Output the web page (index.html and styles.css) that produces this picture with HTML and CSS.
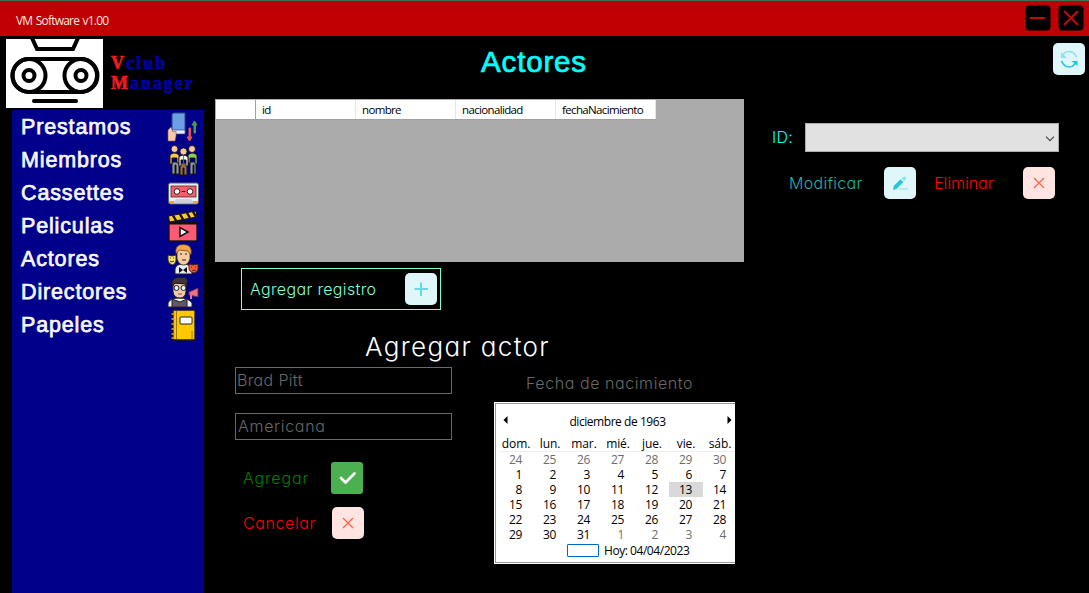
FILE: index.html
```html
<!DOCTYPE html>
<html lang="es">
<head>
<meta charset="utf-8">
<title>VM Software</title>
<link rel="stylesheet" href="styles.css">
</head>
<body>
<div class="window">
  <header class="titlebar">
    <span class="app-name">VM Software v1.00</span>
    <div class="window-buttons">
      <svg width="26" height="26" viewBox="0 0 26 26"><rect x=".5" y=".5" width="25" height="25" rx="4"/><path d="M5 13H20"/></svg>
      <svg width="26" height="26" viewBox="0 0 26 26"><rect x=".5" y=".5" width="25" height="25" rx="4"/><path d="M6 6L20 20M20 6L6 20"/></svg>
    </div>
  </header>
  <div class="body">
    <aside class="side">
      <div class="brand">
        <svg class="logo" width="97" height="69" viewBox="0 0 97 69" fill="none" stroke="#000" stroke-width="4">
          <rect width="97" height="69" fill="#fff" stroke="none"/>
          <path d="M26 -1L31 10H67L72 -1"/>
          <rect x="6.500" y="20" width="84.500" height="33" rx="16.5"/>
          <circle cx="23" cy="36.500" r="16.500"/><circle cx="75" cy="36.500" r="16.500"/>
          <circle cx="23" cy="36.500" r="5.500"/><circle cx="75" cy="36.500" r="5.500"/>
          <path d="M28 62H70" stroke-linecap="round"/>
        </svg>
        <div class="brand-name"><div class="b1"><b>V</b>club</div><div class="b2"><b>M</b>anager</div></div>
      </div>
      <nav class="menu">
        <a class="item">Prestamos
          <svg viewBox="0 0 32 32"><path d="M5 4Q5 2 7 2H18V21H5Z" fill="#6d9fe6" stroke="#254b86"/><path d="M5 19H18V23H6Z" fill="#e8eef8" stroke="#254b86" stroke-width=".7"/><path d="M1 30V19L4 16L6 21L9 20V25L8 30Z" fill="#f6c9ae" stroke="#8a5b4b" stroke-width=".6"/><path d="M27 22V14H25L27.500 10L30 14H28.500V22Z" fill="#43a047" stroke="#43a047"/><path d="M22 17V26H20L22.500 30L25 26H23.500V17Z" fill="#e05555" stroke="#e05555"/></svg></a>
        <a class="item">Miembros
          <svg viewBox="0 0 32 32" stroke="#111" stroke-width=".9"><path d="M5 18H12V30H9V21H8V30H5ZM23 18H29V30H27V21H26V30H23Z" fill="#8b98a5"/><path d="M3 11Q7 7 12 11V19H10V14H5V20H3Z" fill="#ffc84b"/><path d="M21 11Q25 7 30 11V20H28V14H23V19H21Z" fill="#8bcf5b"/><circle cx="7.500" cy="5" r="3.500" fill="#f8c9a0"/><circle cx="25" cy="5" r="3.500" fill="#f8c9a0"/><path d="M13 19H20V31H17V24H16V31H13Z" fill="#9b6b43"/><path d="M12 13Q16 9 21 13V22H19V16H14V22H12Z" fill="#f4f4f4"/><path d="M16.500 12V19" stroke="#d33"/><circle cx="16.500" cy="7.500" r="3.600" fill="#f8c9a0"/></svg></a>
        <a class="item">Cassettes
          <svg viewBox="0 0 32 32"><rect x="1.500" y="6" width="30" height="21" rx="2" fill="#e9edf2" stroke="#58606b"/><rect x="4" y="9" width="25" height="11" fill="#ff5b6b" stroke="#222" stroke-width=".7"/><g fill="#fff" stroke="#222"><circle cx="10" cy="14.500" r="2.800"/><circle cx="23" cy="14.500" r="2.800"/></g><path d="M14.500 14.500H18.500" stroke="#222"/><path d="M6 26L9 22H24L27 26Z" fill="#ccd2dc"/><path d="M2 25H7M26 25H31" stroke="#f6a623" stroke-width="2"/></svg></a>
        <a class="item">Peliculas
          <svg viewBox="0 0 32 32"><rect x="2" y="13" width="28" height="18" fill="#ff5a74" stroke="#111" stroke-width="1.300"/><path d="M1.500 6L29 1L30 7L2.500 12Z" fill="#ffc928" stroke="#111"/><path d="M6 5.500L9 10.500M13 4L16 9.500M20 3L23 8M26 1.500L29 7" stroke="#111" stroke-width="2.400"/><path d="M2 12H30V14.500H2Z" fill="#111"/><path d="M13 17.500V26.500L21 22Z" fill="#fff" stroke="#111" stroke-width="1.500"/></svg></a>
        <a class="item">Actores
          <svg viewBox="0 0 32 32"><path d="M8 31V26Q9 21 16 21Q23 21 25 26V31Z" fill="#e5edf5" stroke="#222"/><path d="M10 8Q10 3 16 3Q23 3 23 9V16Q21 22 16.500 22Q12 22 10 16Z" fill="#f6cc9f" stroke="#2b2020" stroke-width=".8"/><path d="M9 11Q7 1 17 1.500Q26 2 24 12L21 8L12 7Z" fill="#f4a64c" stroke="#583521" stroke-width=".7"/><path d="M13 11H15M18 11H20M15 17H19" stroke="#222"/><path d="M12 24L16 27L12 30ZM20 24L16 27L20 30Z" fill="#111"/><path d="M1 12Q5 14 9 12V18Q8 22 5 22Q1 20 1 17Z" fill="#ffe56b" stroke="#332"/><path d="M3 15H4M6 15H7M3 18Q5 20 7 18" stroke="#332" fill="none"/><path d="M22 21Q26 23 31 21V26Q30 30 27 30Q22 29 22 25Z" fill="#ff5738" stroke="#522"/><path d="M24 24H25M28 24H29M25 28Q27 26 29 28" stroke="#332" fill="none"/></svg></a>
        <a class="item">Directores
          <svg viewBox="0 0 32 32"><path d="M1 31V27Q3 22 12 22Q22 22 25 27V31Z" fill="#eef3f7" stroke="#222"/><path d="M5 31V23L13 26L20 23V31Z" fill="#665766" stroke="#222"/><path d="M6 7H19V16Q18 22 13 22Q7 22 6 16Z" fill="#f3c9a7" stroke="#222"/><path d="M5 11V5Q8 0 15 1.500Q22 0 20 8V11L18 8L8 7Z" fill="#41353d" stroke="#191519"/><g fill="#dff4ff" stroke="#222"><circle cx="9.500" cy="12" r="2.500"/><circle cx="16.500" cy="12" r="2.500"/></g><path d="M11 18H15" stroke="#854"/><path d="M22 16L31 12V21L22 19Z" fill="#ef7185" stroke="#612e49"/><path d="M24 19V23" stroke="#ef7185" stroke-width="2"/></svg></a>
        <a class="item">Papeles
          <svg viewBox="0 0 32 32"><path d="M6 1H28V31H6Z" fill="#ffc800" stroke="#1b1b1b" stroke-width="1.300"/><path d="M9.500 2V30" stroke="#80651a" stroke-width=".8"/><path d="M4.500 5H8M4.500 10H8M4.500 15H8M4.500 20H8M4.500 25H8M4.500 29H8" stroke="#d9aa22" stroke-width="1.600"/><rect x="13" y="8" width="12" height="7" rx="1" fill="#fff" stroke="#222"/><path d="M25 30V22" stroke="#9a7700"/></svg></a>
      </nav>
    </aside>
    <main class="content">
      <h1 class="page-title">Actores</h1>
      <div class="table">
        <div class="thead"><span class="corner"></span><span>id</span><span>nombre</span><span>nacionalidad</span><span>fechaNacimiento</span></div>
      </div>
      <div class="add-record"><span class="add-label">Agregar registro</span>
        <svg class="btn cyan" viewBox="0 0 32 32"><path d="M16 9.500V23M9.500 16H23" stroke="#67d8e5" stroke-width="2"/></svg></div>
      <h2 class="form-title">Agregar actor</h2>
      <div class="form">
        <div class="fields">
          <div class="field f1">Brad Pitt</div>
          <div class="field f2">Americana</div>
          <div class="action ok"><span>Agregar</span>
            <svg class="btn green" viewBox="0 0 32 32"><path d="M10 16L14.500 20.500L23.500 11.500" stroke="#fff" stroke-width="2.700" stroke-linecap="round" stroke-linejoin="round" fill="none"/></svg></div>
          <div class="action cancel"><span>Cancelar</span>
            <svg class="btn pink" viewBox="0 0 32 32"><path d="M11 11L21 21M21 11L11 21" stroke="#ff6347" stroke-width="1.300"/></svg></div>
        </div>
        <div class="birth">
          <div class="birth-label">Fecha de nacimiento</div>
          <div class="calendar">
            <div class="cal-head"><svg width="5" height="8" viewBox="0 0 5 8"><path d="M4.500 0V8L.5 4Z"/></svg><span>diciembre de 1963</span><svg width="5" height="8" viewBox="0 0 5 8"><path d="M.5 0V8L4.500 4Z"/></svg></div>
            <div class="week"><span>dom.</span><span>lun.</span><span>mar.</span><span>mié.</span><span>jue.</span><span>vie.</span><span>sáb.</span></div>
            <div class="days">
              <i>24</i><i>25</i><i>26</i><i>27</i><i>28</i><i>29</i><i>30</i>
              <span>1</span><span>2</span><span>3</span><span>4</span><span>5</span><span>6</span><span>7</span>
              <span>8</span><span>9</span><span>10</span><span>11</span><span>12</span><span class="selected">13</span><span>14</span>
              <span>15</span><span>16</span><span>17</span><span>18</span><span>19</span><span>20</span><span>21</span>
              <span>22</span><span>23</span><span>24</span><span>25</span><span>26</span><span>27</span><span>28</span>
              <span>29</span><span>30</span><span>31</span><i>1</i><i>2</i><i>3</i><i>4</i>
            </div>
            <div class="today"><span class="today-box"></span><span>Hoy: 04/04/2023</span></div>
          </div>
        </div>
      </div>
    </main>
    <section class="tools">
      <svg class="btn cyan refresh" viewBox="0 0 32 32" fill="none" stroke-width="1.700"><path d="M9 14Q11 8.500 16 8.500Q21 8.500 23.500 14" stroke="#8fe1eb"/><path d="M8 9V15H14Z" fill="#8fe1eb"/><path d="M23.500 18Q21 24 16 24Q11 24 8.500 18" stroke="#26c6da"/><path d="M24.500 23V18H18.500Z" fill="#26c6da"/></svg>
      <div class="id-row"><span class="id-label">ID:</span><div class="select"><svg width="10" height="6" viewBox="0 0 10 6"><path d="M1 .7L5 4.700L9 .7" fill="none" stroke="#444" stroke-width="1.100"/></svg></div></div>
      <div class="edit-row"><span class="modify">Modificar</span>
        <svg class="btn cyan" viewBox="0 0 32 32"><path d="M9 23L9.700 19L16.500 12.300L19.300 15L12.500 22Z" fill="#26c6da"/><path d="M17.500 11.300L19 10Q20.300 9 21.700 10.300Q22.700 11.700 21.500 12.800L20.300 14Z" fill="#8fe1eb"/><path d="M15 22H24" stroke="#a5e7ef" stroke-width="1.600"/></svg>
        <span class="delete">Eliminar</span>
        <svg class="btn pink" viewBox="0 0 32 32"><path d="M11 11L21 21M21 11L11 21" stroke="#ff6347" stroke-width="1.300"/></svg></div>
    </section>
  </div>
</div>
</body>
</html>
```
FILE: styles.css
```css
* { box-sizing: border-box; }
body { margin: 0; background: #000; }
.window { width: 1089px; height: 593px; display: flex; flex-direction: column; background: #000; overflow: hidden; white-space: nowrap; }
svg { display: block; flex: none; }

.titlebar { height: 36px; flex: none; display: flex; justify-content: space-between; padding: 4px 5px 0 16px; background: #c00000; border-top: 1px solid #3f705b; }
.app-name { font: 12px/31px "Open Sans", sans-serif; letter-spacing: -.78px; word-spacing: 1px; color: #f5e8e8; }
.window-buttons { display: flex; gap: 7px; }
.window-buttons rect { fill: #000; }
.window-buttons path { stroke: #c80808; stroke-width: 2; }
.body { display: flex; flex: 1; min-height: 0; }

.side { width: 215px; flex: none; display: flex; flex-direction: column; padding-top: 3px; }
.brand { display: flex; gap: 8px; padding-left: 6px; height: 71px; flex: none; }
.brand-name { padding-top: 14px; font: bold 18px/20px "Liberation Serif", serif; color: #0000a0; -webkit-text-stroke: .7px #0000a0; }
.brand-name b { color: #ed1c24; -webkit-text-stroke-color: #ed1c24; }
.b1 { letter-spacing: 2px; }
.b2 { letter-spacing: 1.9px; }
.menu { flex: 1; width: 192px; margin-left: 12px; background: #00008b; }
.item { display: flex; justify-content: space-between; height: 33px; padding: 1px 5px 0 9px; font: 21.500px/32px "Liberation Sans", Arial, sans-serif; letter-spacing: .85px; -webkit-text-stroke: .75px #f5f5f5; color: #f5f5f5; }
.item svg { width: 32px; height: 32px; }

.content { width: 529px; flex: none; }
.page-title { margin: 6px 0 0 266px; font: 29.500px/40px "Liberation Sans", Arial, sans-serif; letter-spacing: .85px; color: #0ff; -webkit-text-stroke: .7px #0ff; }
.table { margin-top: 17px; height: 163px; background: #ababab; padding: 1px 0 0 1px; }
.thead { display: flex; width: 440px; height: 20px; background: #fff; border-bottom: 1px solid #a0a0a0; font: 11.500px/20px "Open Sans", sans-serif; letter-spacing: -.65px; color: #000; }
.thead span { width: 100px; padding-left: 6px; border-right: 1px solid #e5e5e5; }
.thead .corner { width: 40px; border-right-color: #a0a0a0; }

.add-record, .form-title, .field, .action, .birth-label, .id-label, .edit-row { font-family: Inter, sans-serif; font-weight: 300; font-feature-settings: "cv11"; }
.add-record { margin: 6px 0 0 26px; width: 200px; height: 42px; border: 1px solid #7fffd4; padding: 4px 3px 0 8px; display: flex; justify-content: space-between; font-size: 16px; line-height: 32px; letter-spacing: .35px; color: #7fffd4; }
.btn { width: 32px; height: 32px; border-radius: 5px; }
.cyan { background: #e0f7fa; }
.pink { background: #ffe4e1; }
.green { background: #4caf50; border-radius: 3px; }
.form-title { margin: 17px 0 0 150px; font-size: 26px; line-height: 40px; letter-spacing: 1.35px; color: #fff; }
.form { display: flex; padding-left: 20px; }
.fields { width: 259px; }
.field { width: 217px; height: 27px; border: 1px solid #696969; padding-left: 1px; font-size: 16px; line-height: 25px; letter-spacing: .35px; color: #696969; }
.f2 { margin-top: 19px; padding-left: 2px; letter-spacing: .7px; }
.action { display: flex; justify-content: space-between; padding-left: 8px; font-size: 16px; line-height: 32px; }
.ok { width: 128px; margin-top: 22px; letter-spacing: .85px; color: #008000; }
.cancel { width: 129px; margin-top: 13px; letter-spacing: .6px; color: #f00; }
.birth { width: 241px; }
.birth-label { padding: 4px 0 0 32px; height: 35px; font-size: 16px; line-height: 24px; letter-spacing: .57px; color: #696969; }
.calendar { height: 162px; width: 241px; overflow: hidden; background: #fff; border: 1px solid #fff; border-right: 0; box-shadow: inset 1px 1px #999, inset 0 -1px #999; font: 12px/15px "Open Sans", sans-serif; letter-spacing: -.35px; color: #000; }
.cal-head { display: flex; justify-content: space-between; align-items: center; height: 22px; margin-top: 7px; margin-bottom: 1px; padding: 0 3px 0 8px; font-size: 12px; letter-spacing: -.45px; }
.cal-head svg { margin-top: -2px; }
.week, .days { display: grid; grid-template-columns: repeat(7, 34px); margin-left: 4px; }
.week { height: 19px; line-height: 22px; text-align: center; border-bottom: 1px solid #eee; letter-spacing: -.1px; }
.days { grid-auto-rows: 15px; text-align: right; }
.days span, .days i { padding-right: 11px; font-style: normal; }
.days i { color: #6d6d6d; }
.days .selected { background: #d9d9d9; }
.today { display: flex; gap: 5px; padding: 1px 0 0 72px; letter-spacing: -.45px; }
.today-box { width: 32px; height: 13px; margin-top: 1px; border: 1px solid #0066cc; border-radius: 1px; }

.tools { flex: 1; display: flex; flex-direction: column; padding: 7px 0 0 28px; }
.refresh { align-self: flex-end; margin-right: 4px; }
.id-row { display: flex; margin-top: 48px; height: 29px; }
.id-label { width: 33px; font-size: 16px; line-height: 29px; letter-spacing: .3px; color: #0ff; }
.select { width: 254px; display: flex; align-items: center; justify-content: flex-end; padding: 2px 3px 0 0; background: #e1e1e1; border: 1px solid #adadad; }
.edit-row { display: flex; margin-top: 15px; padding-left: 17px; font-size: 16px; line-height: 32px; }
.modify { width: 95px; letter-spacing: .3px; color: #20b2aa; }
.delete { width: 89px; margin-left: 18px; color: #f00; }
```
